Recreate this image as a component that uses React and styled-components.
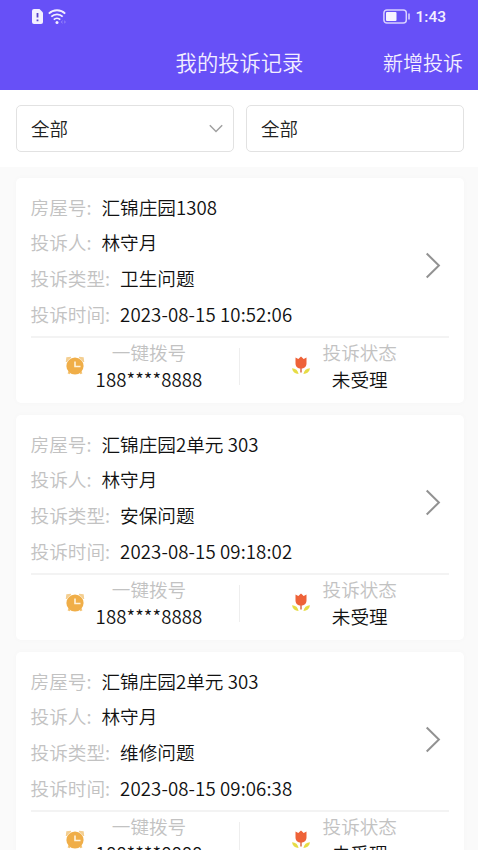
import React from "react";
import styled, { createGlobalStyle } from "styled-components";

const GlobalStyle = createGlobalStyle`
  * {
    box-sizing: border-box;
  }
  html {
    height: 100%;
    overflow: hidden;
  }
  body {
    margin: 0;
    height: 100%;
    overflow: hidden;
    background-color: #fafafa;
    font-family: "Noto Sans CJK SC", sans-serif;
    font-weight: 350;
  }
`;

const Page = styled.div`
  width: 100%;
  height: 850px;
  overflow: hidden;
  background-color: #fafafa;
`;

const Header = styled.header`
  height: 90px;
  background-color: #6750f7;
  color: #f3efff;
`;

const StatusBar = styled.div`
  height: 32px;
  padding: 0 32px 0 32px;
  display: flex;
  align-items: center;
  justify-content: space-between;
`;

const StatusGroup = styled.div`
  display: flex;
  align-items: center;
  gap: ${(props) => props.$gap}px;
  svg {
    display: block;
  }
`;

const Clock = styled.span`
  padding-top: 1px;
  font-family: Roboto, sans-serif;
  font-size: 15.5px;
  font-weight: 500;
  line-height: 18px;
`;

const TitleBar = styled.div`
  height: 56px;
  padding: 0 15px;
  display: grid;
  grid-template-columns: 1fr auto 1fr;
  align-items: center;
`;

const Title = styled.h1`
  grid-column: 2;
  margin: 0;
  padding-left: 1px;
  font-size: 21.3px;
  font-weight: 350;
  line-height: 56px;
`;

const AddLink = styled.span`
  justify-self: end;
  padding-top: 2px;
  font-size: 20px;
  line-height: 58px;
`;

const Filters = styled.div`
  height: 77px;
  padding: 15px 14px 0 16px;
  display: grid;
  grid-template-columns: 218px 218px;
  justify-content: space-between;
  background-color: #fff;
`;

const FilterBox = styled.div`
  height: 47px;
  padding: 0 10px 2px 14px;
  display: flex;
  align-items: center;
  justify-content: space-between;
  border: 1px solid #e2e2e2;
  border-radius: 5px;
  color: #222;
  font-size: 18.5px;
  svg {
    margin-top: 2px;
  }
`;

const List = styled.div`
  padding: 11px 14px 0 16px;
  display: flex;
  flex-direction: column;
  gap: 12px;
`;

const Card = styled.article`
  height: 225px;
  flex-shrink: 0;
  padding: 0 15px 0 14.5px;
  background-color: #fff;
  border-radius: 5px;
  box-shadow: 0 0 6px rgba(0, 0, 0, 0.025);
`;

const Details = styled.div`
  height: 160px;
  padding-top: 6px;
  display: flex;
  align-items: center;
  justify-content: space-between;
  border-bottom: 2px solid #f3f3f3;
  svg {
    margin: 10px 8px 0 0;
  }
`;

const Row = styled.div`
  height: 35.75px;
  display: flex;
  align-items: center;
  gap: 10px;
  font-size: 18.65px;
  line-height: 35.75px;
  white-space: nowrap;
`;

const Label = styled.span`
  color: #c2c2c2;
`;

const Value = styled.span`
  color: #111;
  letter-spacing: ${(props) => props.$spacing || 0}px;
`;

const Footer = styled.div`
  height: 65px;
  display: grid;
  grid-template-columns: 1fr 1fr;
`;

const Action = styled.div`
  display: grid;
  grid-template-columns: 20px ${(props) => props.$textWidth}px;
  column-gap: ${(props) => props.$gap}px;
  align-content: start;
  align-items: center;
  padding: 1px 0 0 ${(props) => props.$offset}px;
`;

const LeftAction = styled(Action)`
  background: linear-gradient(#eeeeee, #eeeeee) right 10px / 1px 37px no-repeat;
`;

const ActionText = styled.div`
  display: flex;
  flex-direction: column;
  align-items: center;
  font-size: 18.6px;
  line-height: 26.5px;
  white-space: nowrap;
`;

const records = [
  { house: "汇锦庄园1308", type: "卫生问题", time: "2023-08-15 10:52:06" },
  { house: "汇锦庄园2单元 303", type: "安保问题", time: "2023-08-15 09:18:02" },
  { house: "汇锦庄园2单元 303", type: "维修问题", time: "2023-08-15 09:06:38" },
];

function SimIcon() {
  return (
    <svg width="11" height="15" viewBox="0 0 11 15">
      <path d="M2 0h5.5L11 3.5V13a2 2 0 0 1-2 2H2a2 2 0 0 1-2-2V2a2 2 0 0 1 2-2z" fill="#f3efff" />
      <path d="M5.5 4v4.5M5.5 10.5v1.7" stroke="#5843c8" strokeWidth="1.8" />
    </svg>
  );
}

function WifiIcon() {
  return (
    <svg width="18" height="15" viewBox="0 0 18 15" fill="none" stroke="#f3efff">
      <path d="M.8 4.6a11.7 11.7 0 0 1 16.4 0" strokeWidth="1.8" />
      <path d="M3.3 7.7a8.1 8.1 0 0 1 11.4 0" strokeWidth="1.8" />
      <path d="M5.8 10.6a4.6 4.6 0 0 1 6.4 0" strokeWidth="1.8" />
      <circle cx="9" cy="13.4" r="1.5" fill="#f3efff" stroke="none" />
      <path d="M14.7 11.8l-1.5 1.2 1.5 1.2M16 11.8l1.5 1.2-1.5 1.2" strokeWidth=".7" opacity=".45" />
    </svg>
  );
}

function BatteryIcon() {
  return (
    <svg width="28" height="15" viewBox="0 0 28 15">
      <rect x=".9" y=".9" width="22.4" height="13.2" rx="3" fill="none" stroke="#d8d0ff" strokeWidth="1.5" />
      <rect x="3" y="3" width="10.5" height="9" rx="1" fill="#f6f3ff" />
      <path d="M26 4.5v6" stroke="#d8d0ff" strokeWidth="1.6" />
    </svg>
  );
}

function DownIcon() {
  return (
    <svg width="14" height="9" viewBox="0 0 14 9" fill="none">
      <path d="M.8 1.2L7 7.5l6.2-6.3" stroke="#a0a0a0" strokeWidth="1.5" />
    </svg>
  );
}

function ArrowIcon() {
  return (
    <svg width="16" height="27" viewBox="0 0 16 27" fill="none">
      <path d="M1.7 1.5l12.2 12-12.2 12" stroke="#929292" strokeWidth="2" />
    </svg>
  );
}

function AlarmIcon() {
  return (
    <svg width="20" height="20" viewBox="0 0 20 20">
      <path d="M1.5 6L2 2l4-.5M18.5 6L18 2l-4-.5" fill="#f4cf91" stroke="#f4cf91" strokeWidth="1.5" />
      <path d="M4.5 15.5L3.8 17.8M15.5 15.5l.7 2.3" stroke="#f4c578" strokeWidth="2.5" />
      <circle cx="10" cy="10" r="8.6" fill="#f0ae48" />
      <path d="M10 5.5V10.5h5.5" fill="none" stroke="#fff3dc" strokeWidth="1.6" />
    </svg>
  );
}

function TulipIcon() {
  return (
    <svg width="20" height="20" viewBox="0 0 20 20">
      <path d="M10 10v6.5" stroke="#d8694a" strokeWidth="1.5" />
      <path d="M4.5 1.5l2.8 1.6L10 .6l2.7 2.5 2.8-1.6v6c0 3-2.2 5-5.5 5s-5.5-2-5.5-5z" fill="#ee6238" />
      <path d="M1 12.2c3.6.2 6 2.2 6.6 5.8C4 17.8 1.6 15.8 1 12.2z" fill="#e6dc45" />
      <path d="M19 12.2c-3.6.2-6 2.2-6.6 5.8 3.6-.2 6-2.2 6.6-5.8z" fill="#e6dc45" />
    </svg>
  );
}

function Field({ label, value, spacing }) {
  return (
    <Row>
      <Label>{label}:</Label>
      <Value $spacing={spacing}>{value}</Value>
    </Row>
  );
}

function ComplaintCard({ record }) {
  return (
    <Card>
      <Details>
        <div>
          <Field label="房屋号" value={record.house} />
          <Field label="投诉人" value="林守月" />
          <Field label="投诉类型" value={record.type} />
          <Field label="投诉时间" value={record.time} spacing={0.1} />
        </div>
        <ArrowIcon />
      </Details>
      <Footer>
        <LeftAction $offset={34.5} $gap={10} $textWidth={108}>
          <AlarmIcon />
          <ActionText>
            <Label>一键拨号</Label>
            <Value $spacing={0.1}>188****8888</Value>
          </ActionText>
        </LeftAction>
        <Action $offset={51} $gap={11} $textWidth={76}>
          <TulipIcon />
          <ActionText>
            <Label>投诉状态</Label>
            <Value>未受理</Value>
          </ActionText>
        </Action>
      </Footer>
    </Card>
  );
}

function App() {
  return (
    <Page>
      <GlobalStyle />
      <Header>
        <StatusBar>
          <StatusGroup $gap={5}>
            <SimIcon />
            <WifiIcon />
          </StatusGroup>
          <StatusGroup $gap={4}>
            <BatteryIcon />
            <Clock>1:43</Clock>
          </StatusGroup>
        </StatusBar>
        <TitleBar>
          <Title>我的投诉记录</Title>
          <AddLink>新增投诉</AddLink>
        </TitleBar>
      </Header>
      <Filters>
        <FilterBox>
          全部
          <DownIcon />
        </FilterBox>
        <FilterBox>全部</FilterBox>
      </Filters>
      <List>
        {records.map((record) => (
          <ComplaintCard key={record.time} record={record} />
        ))}
      </List>
    </Page>
  );
}

export default App;
